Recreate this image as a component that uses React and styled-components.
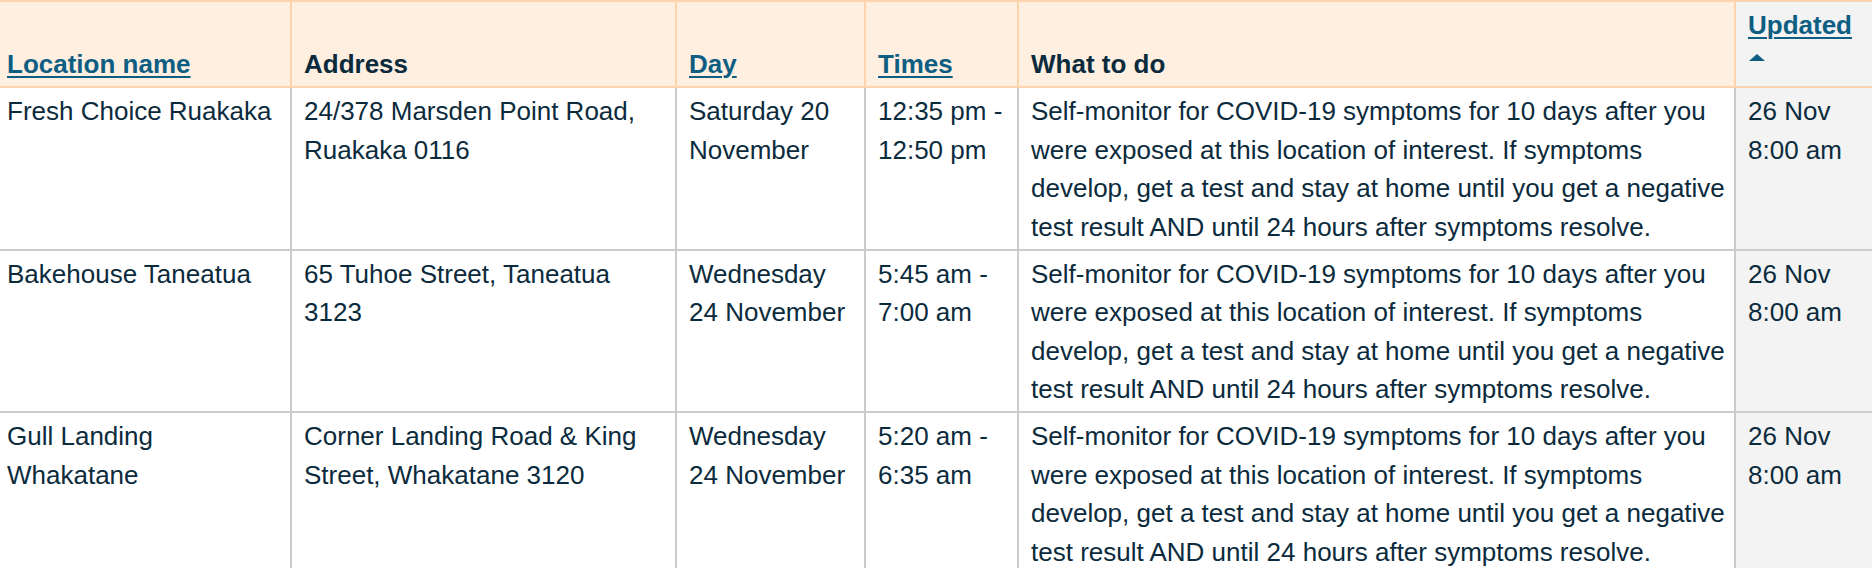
import React from 'react';
import styled, { createGlobalStyle } from 'styled-components';

const GlobalStyle = createGlobalStyle`
  html, body {
    margin: 0;
    padding: 0;
    background: #fff;
    overflow: hidden;
  }
  body {
    font-family: "Liberation Sans", Arial, Helvetica, sans-serif;
    color: #0b2b3d;
  }
`;

const Table = styled.table`
  width: 1872px;
  table-layout: fixed;
  border-collapse: separate;
  border-spacing: 0;
  font-size: 26px;
  line-height: 1.485;
`;

const HeadCell = styled.th`
  box-sizing: border-box;
  width: ${p => p.$w}px;
  text-align: left;
  vertical-align: bottom;
  font-weight: bold;
  padding: 4px 8px 3px 12px;
  background: ${p => (p.$sorted ? '#f3f3f3' : '#feefe1')};
  border-top: 2px solid #fdd4ae;
  border-bottom: 2px solid #fdd4ae;
  border-left: 2px solid #fdd4ae;
  &:first-child {
    border-left: 0;
    padding-left: 7px;
  }
`;

const SortLink = styled.a`
  color: #0d5e82;
  text-decoration: underline;
  text-decoration-thickness: 2px;
  text-underline-offset: 3px;
  cursor: pointer;
`;

const SortArrow = styled.span`
  display: inline-block;
  width: 0;
  height: 0;
  border-left: 8px solid transparent;
  border-right: 8px solid transparent;
  border-bottom: 7px solid #0d5e82;
  vertical-align: 12px;
  margin-left: 1px;
`;

const Cell = styled.td`
  box-sizing: border-box;
  vertical-align: top;
  padding: 4px 8px 2px 12px;
  background: ${p => (p.$sorted ? '#f3f3f3' : '#fff')};
  border-bottom: 2px solid #cccccc;
  border-left: 2px solid #cccccc;
  &:first-child {
    border-left: 0;
    padding-left: 7px;
  }
`;

const columns = [
  { key: 'name', label: 'Location name', width: 290, link: true },
  { key: 'address', label: 'Address', width: 385 },
  { key: 'day', label: 'Day', width: 189, link: true },
  { key: 'times', label: 'Times', width: 153, link: true },
  { key: 'todo', label: 'What to do', width: 717 },
  { key: 'updated', label: 'Updated', width: 138, link: true, sorted: true },
];

const advice =
  'Self-monitor for COVID-19 symptoms for 10 days after you were exposed at this location of interest. If symptoms develop, get a test and stay at home until you get a negative test result AND until 24 hours after symptoms resolve.';

const rows = [
  {
    name: 'Fresh Choice Ruakaka',
    address: '24/378 Marsden Point Road, Ruakaka 0116',
    day: 'Saturday 20 November',
    times: '12:35 pm - 12:50 pm',
    todo: advice,
    updated: '26 Nov 8:00 am',
  },
  {
    name: 'Bakehouse Taneatua',
    address: '65 Tuhoe Street, Taneatua 3123',
    day: 'Wednesday 24 November',
    times: '5:45 am - 7:00 am',
    todo: advice,
    updated: '26 Nov 8:00 am',
  },
  {
    name: 'Gull Landing Whakatane',
    address: 'Corner Landing Road & King Street, Whakatane 3120',
    day: 'Wednesday 24 November',
    times: '5:20 am - 6:35 am',
    todo: advice,
    updated: '26 Nov 8:00 am',
  },
];

const App = () => {
  return (
    <>
      <GlobalStyle />
      <Table>
        <thead>
          <tr>
            {columns.map(col => (
              <HeadCell key={col.key} $w={col.width} $sorted={col.sorted}>
                {col.link ? <SortLink>{col.label}</SortLink> : col.label}
                {col.sorted && (
                  <>
                    {' '}
                    <SortArrow />
                  </>
                )}
              </HeadCell>
            ))}
          </tr>
        </thead>
        <tbody>
          {rows.map(row => (
            <tr key={row.name}>
              {columns.map(col => (
                <Cell key={col.key} $sorted={col.sorted}>
                  {row[col.key]}
                </Cell>
              ))}
            </tr>
          ))}
        </tbody>
      </Table>
    </>
  );
};

export default App;
